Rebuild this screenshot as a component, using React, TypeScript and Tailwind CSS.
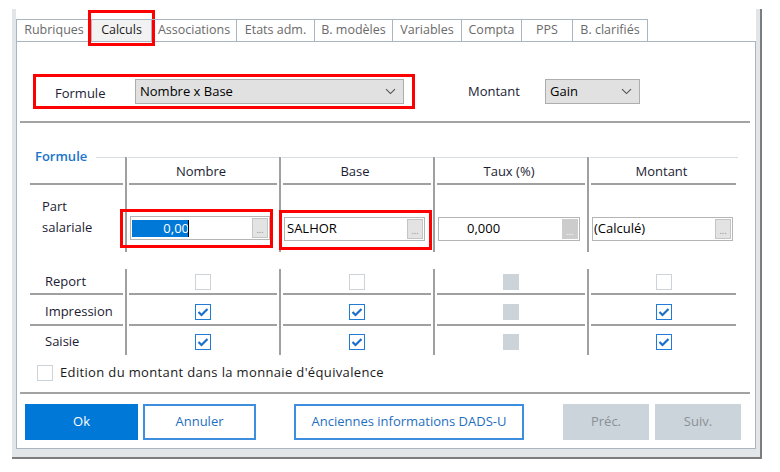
import React from 'react';

const tabs = [
  { label: 'Rubriques', w: 'w-[76px]' },
  { label: 'Calculs', w: 'w-[60px]', active: true },
  { label: 'Associations', w: 'w-[85px]' },
  { label: 'Etats adm.', w: 'w-[78px]' },
  { label: 'B. modèles', w: 'w-[78px]' },
  { label: 'Variables', w: 'w-[69px]' },
  { label: 'Compta', w: 'w-[60px]' },
  { label: 'PPS', w: 'w-[51px]' },
  { label: 'B. clarifiés', w: 'w-[75px]' },
];

function Chevron() {
  return (
    <svg width="11" height="7" viewBox="0 0 11 7" fill="none" stroke="#505050" strokeWidth="1.1">
      <path d="M1 1.2 5.5 5.6 10 1.2" />
    </svg>
  );
}

function Select({ value, w }: { value: string; w: string }) {
  return (
    <div
      className={`${w} h-[25px] flex items-center justify-between pl-[4px] pr-[7px] bg-[#e1e1e1] border border-[#adadad] text-[13px] text-black`}
    >
      <span>{value}</span>
      <Chevron />
    </div>
  );
}

function Dots({ dark }: { dark?: boolean }) {
  return (
    <div
      className={`w-[16px] h-[20px] flex items-end justify-center pb-[3px] text-[9px] leading-none ${
        dark ? 'bg-[#cccccc] text-white' : 'bg-[#e3e3e3] border border-[#c4c4c4] text-[#8a8a8a]'
      }`}
    >
      ...
    </div>
  );
}

function Box({ state }: { state: 'off' | 'on' | 'dis' }) {
  if (state === 'dis') return <div className="w-[16px] h-[16px] bg-[#ccd4da]" />;
  if (state === 'off') return <div className="w-[16px] h-[16px] bg-white border border-[#ccd3d9]" />;
  return (
    <div className="w-[16px] h-[16px] bg-white border border-[#1f7bd5] flex items-center justify-center">
      <svg width="12" height="10" viewBox="0 0 12 10" fill="none" stroke="#1a6fca" strokeWidth="2.2">
        <path d="M1.5 5 4.5 8 10.5 2" />
      </svg>
    </div>
  );
}

const rows: { label: string; h: string; pt: string; line: boolean; boxes: ('off' | 'on' | 'dis')[] }[] = [
  { label: 'Report', h: 'h-[26px]', pt: 'pt-[5px]', line: true, boxes: ['off', 'off', 'dis', 'off'] },
  { label: 'Impression', h: 'h-[31px]', pt: 'pt-[9px]', line: true, boxes: ['on', 'on', 'dis', 'on'] },
  { label: 'Saisie', h: 'h-[29px]', pt: 'pt-[8px]', line: false, boxes: ['on', 'on', 'dis', 'on'] },
];

const headers = ['Nombre', 'Base', 'Taux (%)', 'Montant'];

export default function App() {
  return (
    <div className="w-[780px] h-[472px] bg-white overflow-hidden pt-[9px] pl-[12px] font-['Open_Sans',sans-serif] text-[#1c1c34]">
      <div className="w-[750px] h-[450px] border-r-2 border-b-2 border-[#7d7d7d]">
        <div className="h-full bg-white border-l-4 border-r-4 border-b-8 border-[#e2e6e9] pt-[10px] flex flex-col">
          {/* tabs */}
          <div className="flex h-[22px]">
            {tabs.map((t, i) => (
              <div
                key={t.label}
                className={`${t.w} relative flex items-center justify-center border-t border-r border-[#a9b6c0] text-[12.5px] ${
                  i === 0 ? 'border-l' : ''
                } ${t.active ? 'bg-[#f2f2f2] text-[#1a1a1a]' : 'text-[#6a6a6a]'}`}
              >
                {t.label}
                {t.active && (
                  <div className="absolute left-[-4px] top-[-10px] w-[67px] h-[36px] border-[3px] border-[#ff0000]" />
                )}
              </div>
            ))}
          </div>

          {/* panel */}
          <div className="flex-1 border border-[#a9b6c0] flex flex-col">
            <div className="flex items-center mt-[32px] ml-[16px]">
              <div className="w-[382px] h-[35px] border-[3px] border-[#ff0000] flex items-center">
                <span className="w-[99px] pl-[19px] text-[13px] pt-[4px]">Formule</span>
                <Select value="Nombre x Base" w="w-[269px]" />
              </div>
              <span className="ml-[53px] w-[77px] text-[13px] pt-[1px]">Montant</span>
              <Select value="Gain" w="w-[95px]" />
            </div>

            <div className="mt-[12px] ml-[3px] w-[730px] h-[2px] bg-[#a3a3a3]" />

            {/* formule group */}
            <div className="ml-[13px] mt-[34px] w-[708px]">
              <div className="grid grid-cols-[95px_154px_154px_154px_151px]">
                <div className="h-[28px] flex flex-col">
                  <div className="-mt-[9px] h-[18px] flex items-center">
                    <span className="ml-[5px] text-[13px] font-semibold text-[#1a74cc]">Formule</span>
                    <div className="flex-1 h-px bg-[#d6dde3] ml-[9px]" />
                  </div>
                  <div className="mt-auto h-[2px] bg-[#a0a0a0] mr-[2px]" />
                </div>
                {headers.map((h) => (
                  <div key={h} className="h-[28px] border-l-2 border-[#a0a0a0] flex flex-col">
                    <div className="h-px bg-[#d6dde3] ml-[1px]" />
                    <div className="flex-1 flex items-center justify-center pt-[2px] pr-[4px] text-[13px]">{h}</div>
                    <div className="h-[2px] bg-[#a0a0a0] mx-[2px]" />
                  </div>
                ))}

                {/* part salariale */}
                <div className="h-[67px] pl-[12px] pt-[11px] text-[13px] leading-[21px]">
                  Part
                  <br />
                  salariale
                </div>
                <div className="h-[67px] border-l-2 border-[#a0a0a0] pt-[31px] pl-[3px] relative">
                  <div className="w-[140px] h-[24px] bg-white border border-[#b5b5b5] flex items-center justify-between pl-[1px] pr-[1px]">
                    <div className="w-[57px] h-[17px] bg-[#0078d7] text-white text-[13px] leading-[17px] text-right relative">
                      0,00
                      <div className="absolute right-0 top-0 w-px h-[17px] bg-black" />
                    </div>
                    <Dots />
                  </div>
                  <div className="absolute left-[-7px] top-[24px] w-[153px] h-[39px] border-[3px] border-[#ff0000]" />
                </div>
                <div className="h-[67px] border-l-2 border-[#a0a0a0] pt-[32px] pl-[3px] relative">
                  <div className="w-[141px] h-[24px] bg-white border border-[#b5b5b5] flex items-center justify-between pl-[2px] pr-[1px]">
                    <span className="text-[13px] text-black">SALHOR</span>
                    <Dots />
                  </div>
                  <div className="absolute left-[-2px] top-[25px] w-[153px] h-[40px] border-[3px] border-[#ff0000]" />
                </div>
                <div className="h-[67px] border-l-2 border-[#a0a0a0] pt-[32px] pl-[3px]">
                  <div className="w-[142px] h-[24px] bg-white border border-[#b5b5b5] flex items-center justify-between pl-[28px] pr-[1px]">
                    <span className="text-[13px] text-black">0,000</span>
                    <Dots dark />
                  </div>
                </div>
                <div className="h-[67px] border-l-2 border-[#a0a0a0] pt-[32px] pl-[3px]">
                  <div className="w-[141px] h-[24px] bg-white border border-[#b5b5b5] flex items-center justify-between pl-[1px] pr-[1px]">
                    <span className="text-[13px] text-black">(Calculé)</span>
                    <Dots />
                  </div>
                </div>
              </div>

              {/* checkbox rows */}
              <div className="mt-[17px] grid grid-cols-[95px_154px_154px_154px_151px]">
                {rows.map((r) => (
                  <React.Fragment key={r.label}>
                    <div className={`${r.h} flex flex-col`}>
                      <div className={`flex-1 ${r.pt} pl-[15px]`}>
                        <div className="h-[16px] flex items-center text-[13px]">{r.label}</div>
                      </div>
                      {r.line && <div className="h-[2px] bg-[#a0a0a0] mr-[2px]" />}
                    </div>
                    {r.boxes.map((b, i) => (
                      <div key={i} className={`${r.h} border-l-2 border-[#a0a0a0] flex flex-col`}>
                        <div className={`flex-1 ${r.pt} flex justify-center`}>
                          <Box state={b} />
                        </div>
                        {r.line && <div className="h-[2px] bg-[#a0a0a0] mx-[2px]" />}
                      </div>
                    ))}
                  </React.Fragment>
                ))}
              </div>

              <div className="mt-[8px] ml-[7px] flex items-center gap-[7px]">
                <Box state="off" />
                <span className="text-[13px] tracking-[0.35px] text-[#1a1a1a]">
                  Edition du montant dans la monnaie d'équivalence
                </span>
              </div>
            </div>

            <div className="mt-[9px] ml-[3px] w-[730px] h-[2px] bg-[#a3a3a3]" />

            {/* buttons */}
            <div className="mt-[10px] ml-[8px] flex text-[13px]">
              <button className="w-[113px] h-[36px] bg-[#0078d7] text-white">Ok</button>
              <button className="ml-[5px] w-[113px] h-[36px] bg-white border-2 border-[#3d8ede] text-[#1f6fc0]">
                Annuler
              </button>
              <button className="ml-[38px] w-[230px] h-[36px] bg-white border-2 border-[#3d8ede] text-[#1f6fc0]">
                Anciennes informations DADS-U
              </button>
              <button className="ml-[39px] w-[86px] h-[36px] bg-[#ccd4db] text-[#8a9096]">Préc.</button>
              <button className="ml-[6px] w-[86px] h-[36px] bg-[#ccd4db] text-[#8a9096]">Suiv.</button>
            </div>
          </div>
        </div>
      </div>
    </div>
  );
}
